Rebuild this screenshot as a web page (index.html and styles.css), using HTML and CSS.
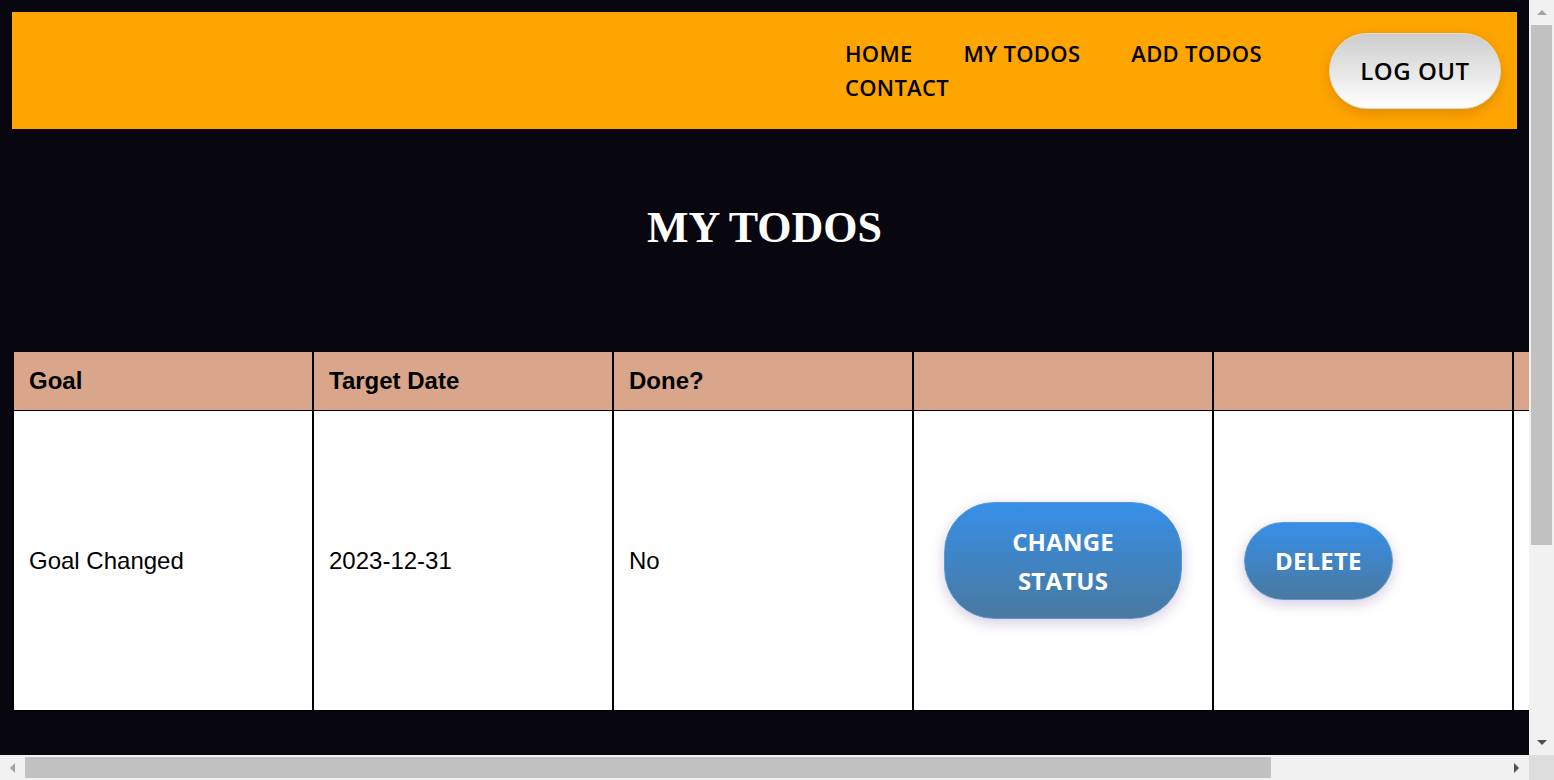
FILE: index.html
```html
<!DOCTYPE html>
<html lang="en">
<head>
<meta charset="utf-8">
<title>My Todos</title>
<link rel="stylesheet" href="styles.css">
</head>
<body>
<div class="viewport">
  <header class="topbar">
    <nav class="nav">
      <a href="#" class="nav-link">HOME</a>
      <a href="#" class="nav-link">MY TODOS</a>
      <a href="#" class="nav-link">ADD TODOS</a>
      <a href="#" class="nav-link">CONTACT</a>
    </nav>
    <button class="logout">LOG OUT</button>
  </header>
  <main class="content">
    <h1 class="title">MY TODOS</h1>
    <table class="todos">
      <thead>
        <tr><th>Goal</th><th>Target Date</th><th>Done?</th><th></th><th></th><th></th></tr>
      </thead>
      <tbody>
        <tr>
          <td>Goal Changed</td>
          <td>2023-12-31</td>
          <td>No</td>
          <td><button class="btn">CHANGE STATUS</button></td>
          <td><button class="btn">DELETE</button></td>
          <td></td>
        </tr>
      </tbody>
    </table>
  </main>
</div>
<div class="sb sb-v" aria-hidden="true">
  <span class="sb-btn"><i class="tri tri-up"></i></span>
  <span class="sb-thumb sb-thumb-v"></span>
  <span class="sb-fill"></span>
  <span class="sb-btn"><i class="tri tri-down"></i></span>
</div>
<div class="sb sb-h" aria-hidden="true">
  <span class="sb-btn"><i class="tri tri-left"></i></span>
  <span class="sb-thumb sb-thumb-h"></span>
  <span class="sb-fill"></span>
  <span class="sb-btn"><i class="tri tri-right"></i></span>
</div>
<div class="sb-corner" aria-hidden="true"></div>
</body>
</html>
```
FILE: styles.css
```css
html {
  background: #08060f;
}
body {
  margin: 0;
  height: 100vh;
  overflow: hidden;
  display: grid;
  grid-template-columns: minmax(0, 1fr) 25px;
  grid-template-rows: minmax(0, 1fr) 25px;
  background: #08060f;
  font-family: "Liberation Sans", Arial, sans-serif;
}
.viewport {
  overflow: hidden;
  padding: 12px;
  min-width: 0;
  min-height: 0;
}
.topbar {
  height: 117px;
  background: #ffa500;
  display: flex;
  align-items: center;
  justify-content: flex-end;
  padding-right: 16px;
}
.nav {
  width: 484px;
  display: flex;
  flex-wrap: wrap;
  column-gap: 51px;
  line-height: 34px;
  margin-top: -2px;
}
.nav-link {
  font-family: "Open Sans", sans-serif;
  font-weight: 600;
  font-size: 22px;
  letter-spacing: 0.3px;
  color: #000;
  text-decoration: none;
}
.logout {
  width: 172px;
  height: 76px;
  border-radius: 38px;
  border: 1px solid #dcdcdc;
  background: linear-gradient(#cdcdcd, #ffffff);
  font-family: "Open Sans", sans-serif;
  font-weight: 600;
  font-size: 24px;
  letter-spacing: 0.5px;
  color: #000;
  box-shadow: 0 4px 12px rgba(120, 60, 0, 0.25);
  padding: 0;
}
.title {
  margin: 73px 0 99px;
  text-align: center;
  color: #fff;
  font-family: "Liberation Serif", "Times New Roman", serif;
  font-weight: bold;
  font-size: 44px;
}
.todos {
  border-collapse: separate;
  border-spacing: 0;
  table-layout: fixed;
  width: 1800px;
  font-size: 24px;
}
.todos th,
.todos td {
  box-sizing: border-box;
  width: 300px;
  border-left: 2px solid #000;
  border-bottom: 1px solid #000;
  padding: 15px;
  text-align: left;
  color: #000;
}
.todos th {
  background: #d9a68c;
  font-weight: bold;
  height: 58px;
}
.todos td {
  background: #fff;
  height: 300px;
}
.btn {
  margin: 0 15px;
  font-family: "Open Sans", sans-serif;
  font-weight: 700;
  font-size: 24px;
  letter-spacing: 0.2px;
  line-height: 39px;
  padding: 18.5px 30px;
  color: #fff;
  border: 1px solid #5b98d6;
  border-radius: 50px;
  background: linear-gradient(#378fe8, #49799f);
  box-shadow: 0 4px 14px rgba(110, 70, 140, 0.28);
}

/* browser scrollbars as drawn in the reference */
.sb {
  display: flex;
  background: #f1f1f1;
}
.sb-v {
  flex-direction: column;
}
.sb-btn {
  flex: 0 0 25px;
  width: 25px;
  height: 25px;
  display: flex;
  align-items: center;
  justify-content: center;
}
.sb-thumb {
  background: #c1c1c1;
}
.sb-thumb-v {
  height: 520px;
  margin: 0 2px;
}
.sb-thumb-h {
  width: 1246px;
  margin: 2px 0;
}
.sb-fill {
  flex: 1;
}
.sb-corner {
  background: #dcdcdc;
}
.tri {
  width: 0;
  height: 0;
}
.tri-up {
  border-left: 5px solid transparent;
  border-right: 5px solid transparent;
  border-bottom: 5px solid #a3a3a3;
}
.tri-down {
  border-left: 5px solid transparent;
  border-right: 5px solid transparent;
  border-top: 5px solid #505050;
}
.tri-left {
  border-top: 5px solid transparent;
  border-bottom: 5px solid transparent;
  border-right: 5px solid #a3a3a3;
}
.tri-right {
  border-top: 5px solid transparent;
  border-bottom: 5px solid transparent;
  border-left: 5px solid #505050;
}
```
